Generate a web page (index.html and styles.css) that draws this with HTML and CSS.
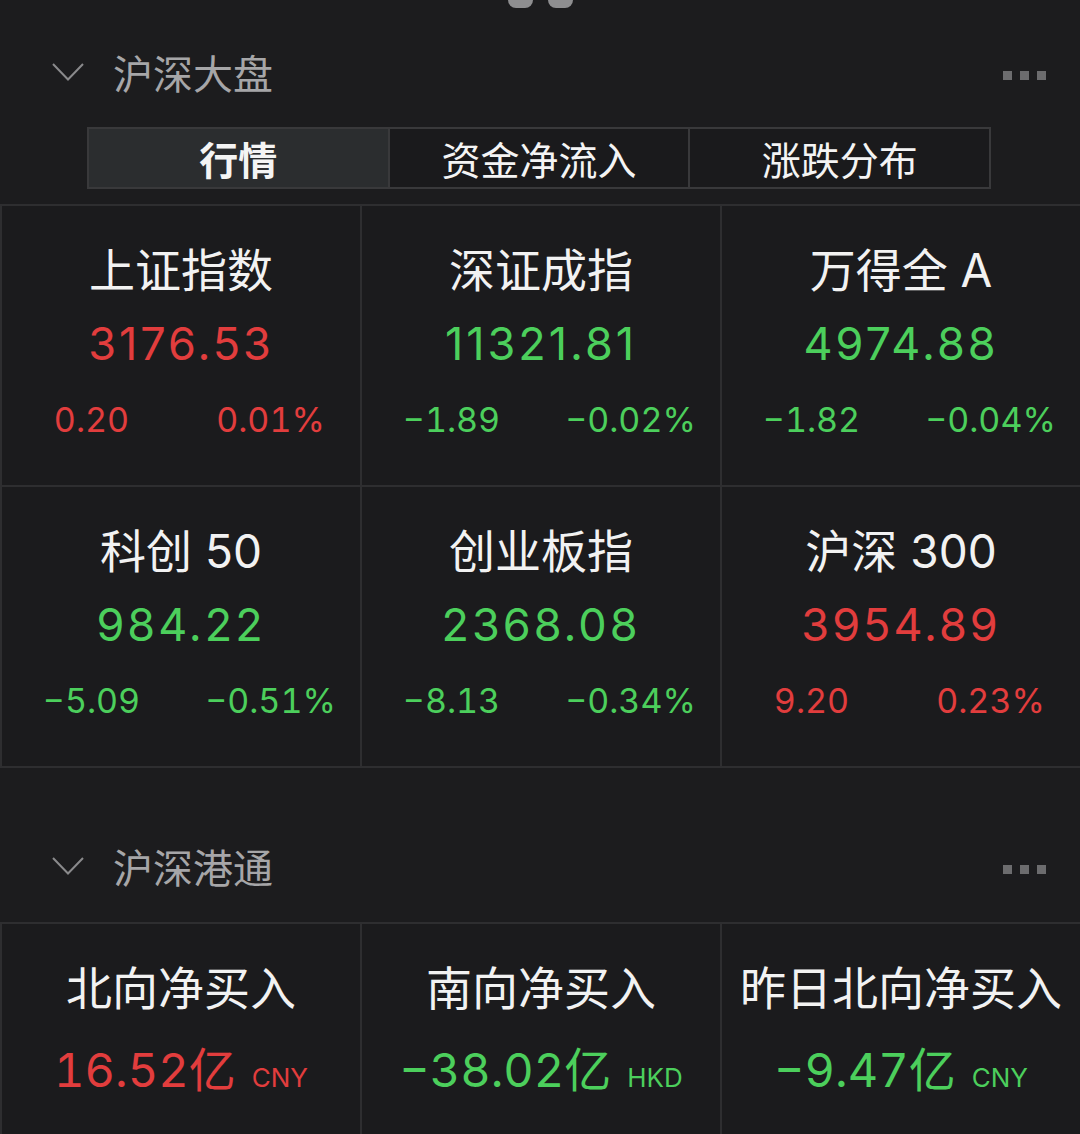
FILE: index.html
```html
<!DOCTYPE html>
<html lang="zh-CN">
  <head>
    <meta charset="UTF-8" />
    <title>沪深大盘</title>
    <link rel="stylesheet" href="styles.css">
  </head>

  <body>
    <div class="handle">
      <span></span>
      <span></span>
    </div>

    <!-- 沪深大盘 -->
    <div class="section-head">
      <svg class="chevron" width="32" height="18" viewBox="0 0 32 18">
        <polyline points="1,1 16,16.5 31,1" fill="none" stroke="#8a8a8c" stroke-width="2" />
      </svg>
      <div class="section-title">沪深大盘</div>
      <div class="more"><i></i><i></i><i></i></div>
    </div>

    <div class="tabs">
      <div class="tab active">行情</div>
      <div class="tab">资金净流入</div>
      <div class="tab">涨跌分布</div>
    </div>

    <div class="grid">
      <div class="cell">
        <div class="name">上证指数</div>
        <div class="price up">3176.53</div>
        <div class="change up"><span>0.20</span><span>0.01%</span></div>
      </div>
      <div class="cell">
        <div class="name">深证成指</div>
        <div class="price down">11321.81</div>
        <div class="change down"><span>−1.89</span><span>−0.02%</span></div>
      </div>
      <div class="cell">
        <div class="name">万得全 A</div>
        <div class="price down">4974.88</div>
        <div class="change down"><span>−1.82</span><span>−0.04%</span></div>
      </div>
      <div class="cell">
        <div class="name">科创 50</div>
        <div class="price down">984.22</div>
        <div class="change down"><span>−5.09</span><span>−0.51%</span></div>
      </div>
      <div class="cell">
        <div class="name">创业板指</div>
        <div class="price down">2368.08</div>
        <div class="change down"><span>−8.13</span><span>−0.34%</span></div>
      </div>
      <div class="cell">
        <div class="name">沪深 300</div>
        <div class="price up">3954.89</div>
        <div class="change up"><span>9.20</span><span>0.23%</span></div>
      </div>
    </div>

    <!-- 沪深港通 -->
    <div class="section-head second">
      <svg class="chevron" width="32" height="18" viewBox="0 0 32 18">
        <polyline points="1,1 16,16.5 31,1" fill="none" stroke="#8a8a8c" stroke-width="2" />
      </svg>
      <div class="section-title">沪深港通</div>
      <div class="more"><i></i><i></i><i></i></div>
    </div>

    <div class="grid flow">
      <div class="cell">
        <div class="name">北向净买入</div>
        <div class="amount up">16.52亿<small>CNY</small></div>
      </div>
      <div class="cell">
        <div class="name">南向净买入</div>
        <div class="amount down">−38.02亿<small>HKD</small></div>
      </div>
      <div class="cell">
        <div class="name">昨日北向净买入</div>
        <div class="amount down">−9.47亿<small>CNY</small></div>
      </div>
    </div>
  </body>
</html>
```

FILE: styles.css
```css
html,
body {
  margin: 0;
}

body {
  background-color: #1c1c1e;
  color: #f2f2f2;
  font-family: Inter, "Noto Sans CJK SC", sans-serif;
  width: 1080px;
  height: 1134px;
  overflow: hidden;
}

.handle {
  display: flex;
  justify-content: center;
  gap: 15px;
  height: 8px;
  overflow: hidden;
}

.handle span {
  width: 25px;
  height: 16px;
  margin-top: -8px;
  border-radius: 8px;
  background-color: #8e8e90;
}

.section-head {
  display: flex;
  align-items: center;
  height: 90px;
  margin-top: 22px;
  padding: 0 34px 0 52px;
}

.section-head.second {
  margin-top: 56px;
}

.chevron {
  display: block;
  margin-top: -6px;
}

.section-title {
  margin-left: 29px;
  font-size: 40px;
  line-height: 56px;
  color: #a6a6a8;
  flex: 1;
}

.more {
  display: flex;
  gap: 8px;
}

.more i {
  width: 9px;
  height: 9px;
  background-color: #6c6c6e;
}

.tabs {
  display: flex;
  width: 904px;
  height: 62px;
  margin: 7px 0 0 87px;
  box-sizing: border-box;
  border: 2px solid #39393b;
}

.tab {
  flex: 1;
  display: flex;
  align-items: center;
  justify-content: center;
  font-size: 39px;
  color: #f4f4f4;
  background-color: #1a1a1c;
}

.tab + .tab {
  border-left: 2px solid #39393b;
}

.tab.active {
  background-color: #2b2d2f;
  font-weight: bold;
}

.grid {
  display: grid;
  grid-template-columns: repeat(3, 1fr);
  grid-auto-rows: 279px;
  gap: 2px;
  margin-top: 15px;
  padding: 2px 0 2px 2px;
  background-color: #2e2e30;
}

.grid.flow {
  margin-top: 8px;
}

.cell {
  background-color: #1b1b1d;
  padding-top: 36px;
  text-align: center;
}

.name {
  font-size: 46px;
  line-height: 56px;
  color: #f2f2f2;
}

.change,
.amount {
  font-variant-numeric: tabular-nums;
}

.price {
  margin-top: 16px;
  font-size: 45px;
  line-height: 60px;
  letter-spacing: 3px;
}

.change {
  display: flex;
  margin-top: 23px;
  font-size: 34px;
  line-height: 46px;
}

.change span {
  flex: 1;
}

.amount {
  margin-top: 24px;
  font-size: 47px;
  line-height: 60px;
}

.amount small {
  margin-left: 16px;
  font-size: 26px;
}

.up {
  color: #e23d3d;
}

.down {
  color: #4ccf5c;
}
```
